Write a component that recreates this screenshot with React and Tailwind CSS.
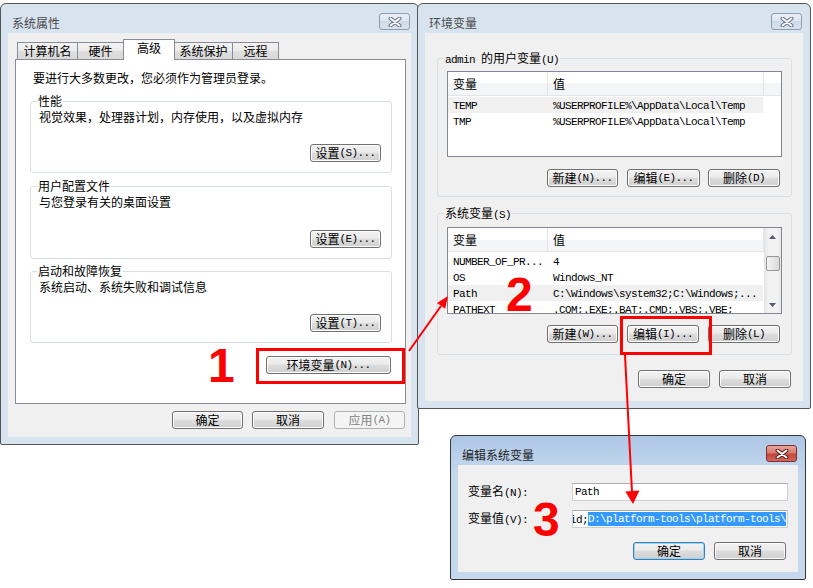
import React from "react";

function Mix({ text }) {
  const parts = text.match(/[\x00-\x7f]+|[^\x00-\x7f]+/g) || [];
  return parts.map((p, i) =>
    /^[\x00-\x7f]/.test(p) ? (
      <span key={i} className="font-['Liberation_Mono',monospace] text-[11px] tracking-[-0.6px] whitespace-pre">
        {p}
      </span>
    ) : (
      <span key={i}>{p}</span>
    )
  );
}

function Btn({ label, w, disabled, primary }) {
  let look =
    "border-[#707070] bg-[linear-gradient(#f2f2f2,#ebebeb_45%,#dddddd_50%,#cfcfcf)] shadow-[inset_0_0_0_1px_#fcfcfc] text-black";
  if (disabled) look = "border-[#adb2b5] bg-[#f4f4f4] text-[#838383]";
  if (primary)
    look =
      "border-[#3c7fb1] bg-[linear-gradient(#f2f2f2,#ebebeb_45%,#dddddd_50%,#cfcfcf)] shadow-[inset_0_0_0_1px_#97d4f6] text-black";
  return (
    <div className={`flex items-center justify-center h-[18px] rounded-[3px] border ${look} ${w}`}>
      <Mix text={label} />
    </div>
  );
}

function Group({ title, bg, className, children }) {
  return (
    <div className={`relative rounded-[3px] border border-[#d5dfe5] ${className}`}>
      <span className={`absolute -top-[9px] left-[6px] px-[1px] ${bg}`}>
        <Mix text={title} />
      </span>
      {children}
    </div>
  );
}

function CloseBtn({ active }) {
  return (
    <div
      className={`mt-[9px] mr-[1px] w-[31px] h-[17px] rounded-[3px] border flex items-center justify-center ${
        active
          ? "border-[#7d2f29] bg-[linear-gradient(#e8a59b,#d97a6e_45%,#c4473c_55%,#d26759)]"
          : "border-[#8e9cb0] bg-[linear-gradient(#e9eff7,#dbe4f0_50%,#cfdbea_50%,#d8e2ef)]"
      }`}
    >
      <svg width="14" height="10" viewBox="0 0 14 10">
        <path
          d="M2.5 1.5 L11.5 8.5 M11.5 1.5 L2.5 8.5"
          stroke={active ? "#5a1d18" : "#6d7786"}
          strokeWidth="4"
          strokeLinecap="round"
        />
        <path
          d="M2.5 1.5 L11.5 8.5 M11.5 1.5 L2.5 8.5"
          stroke={active ? "#ffffff" : "#f5f7fa"}
          strokeWidth="2"
          strokeLinecap="round"
        />
      </svg>
    </div>
  );
}

function Window({ title, active, className, children }) {
  return (
    <div
      className={`absolute flex flex-col border rounded-t-[6px] rounded-b-[2px] px-[7px] pb-[7px] ${
        active
          ? "border-[#363636] bg-[linear-gradient(#adc7e6,#c6d8ee_40px,#c6d8ee)]"
          : "border-[#555555] bg-[#d8e3f0]"
      } ${className}`}
    >
      <div className="h-[29px] flex justify-between shrink-0">
        <div className={`mt-[11px] ml-[4px] ${active ? "text-[#1e1e1e]" : "text-[#4a4a4a]"}`}>{title}</div>
        <CloseBtn active={active} />
      </div>
      <div className="flex-1 bg-[#f0f0f0]">{children}</div>
    </div>
  );
}

function Tab({ label, w }) {
  return (
    <div
      className={`h-[17px] mb-px border border-b-0 border-[#898c95] bg-[linear-gradient(#f3f3f3,#ebebeb_50%,#dedede_50%,#d9d9d9)] flex justify-center ${w}`}
    >
      {label}
    </div>
  );
}

function ScrollBar() {
  return (
    <div className="w-[17px] shrink-0 h-full flex flex-col items-center bg-[linear-gradient(90deg,#e3e3e3,#f2f2f2_25%,#f2f2f2_75%,#e9e9e9)]">
      <div className="h-[17px] flex items-center justify-center">
        <svg width="7" height="4" viewBox="0 0 7 4">
          <path d="M0 4 L3.5 0 L7 4Z" fill="#4e5b70" />
        </svg>
      </div>
      <div className="mt-[11px] w-[14px] h-[15px] rounded-[2px] border border-[#979797] bg-[linear-gradient(90deg,#f4f4f4,#e8e8e8_50%,#d9d9d9)]" />
      <div className="flex-1" />
      <div className="h-[17px] flex items-center justify-center">
        <svg width="7" height="4" viewBox="0 0 7 4">
          <path d="M0 0 L3.5 4 L7 0Z" fill="#4e5b70" />
        </svg>
      </div>
    </div>
  );
}

function VarList({ rows, sel, scroll, h }) {
  return (
    <div className={`flex overflow-hidden border border-[#828790] bg-white w-[335px] ${h}`}>
      <div className="w-[316px] shrink-0">
        <div className="flex h-[24px] border-b border-[#e5e5e5] bg-[linear-gradient(#ffffff_50%,#f4f5f7_50%)]">
          <div className="w-[100px] border-r border-[#e5e5e5] pl-[5px] flex items-center">变量</div>
          <div className="w-[216px] border-r border-[#e5e5e5] pl-[5px] flex items-center">值</div>
        </div>
        <div className="mt-px">
          {rows.map(([k, v], i) => (
            <div
              key={i}
              className={`flex h-[16px] items-center w-[315px] whitespace-nowrap overflow-hidden ${
                i === sel ? "bg-[#f0f0f0]" : ""
              }`}
            >
              <div className="w-[100px] shrink-0 pl-[5px]">
                <Mix text={k} />
              </div>
              <div className="pl-[5px]">
                <Mix text={v} />
              </div>
            </div>
          ))}
        </div>
      </div>
      {scroll ? (
        <ScrollBar />
      ) : (
        <div className="flex-1 h-[24px] border-b border-[#e5e5e5] bg-[linear-gradient(#ffffff_50%,#f4f5f7_50%)]" />
      )}
    </div>
  );
}

function SysProps() {
  return (
    <Window title="系统属性" className="left-0 top-[3px] w-[419px] h-[442px]">
      <div className="pl-[7px] pt-[6px]">
        <div className="relative z-10 flex items-end h-[21px] -mb-px ml-[2px]">
          <Tab label="计算机名" w="w-[61px]" />
          <Tab label="硬件" w="w-[47px] -ml-px" />
          <div className="-ml-px w-[52px] h-[21px] border border-b-0 border-[#898c95] bg-white flex justify-center">
            高级
          </div>
          <Tab label="系统保护" w="w-[59px] -ml-px" />
          <Tab label="远程" w="w-[47px] -ml-px" />
        </div>
        <div className="w-[391px] h-[345px] border border-[#898c95] bg-white flex flex-col pl-[14px] pt-[10px]">
          <div className="ml-[3px]">要进行大多数更改，您必须作为管理员登录。</div>
          <Group
            title="性能"
            bg="bg-white"
            className="mt-[15px] w-[362px] h-[72px] flex flex-col justify-between pt-[7px] pl-[8px] pr-[10px] pb-[10px]"
          >
            <div>视觉效果，处理器计划，内存使用，以及虚拟内存</div>
            <div className="self-end">
              <Btn label="设置(S)..." w="w-[71px]" />
            </div>
          </Group>
          <Group
            title="用户配置文件"
            bg="bg-white"
            className="mt-[13px] w-[362px] h-[73px] flex flex-col justify-between pt-[7px] pl-[8px] pr-[10px] pb-[10px]"
          >
            <div>与您登录有关的桌面设置</div>
            <div className="self-end">
              <Btn label="设置(E)..." w="w-[71px]" />
            </div>
          </Group>
          <Group
            title="启动和故障恢复"
            bg="bg-white"
            className="mt-[12px] w-[362px] h-[72px] flex flex-col justify-between pt-[7px] pl-[8px] pr-[10px] pb-[10px]"
          >
            <div>系统启动、系统失败和调试信息</div>
            <div className="self-end">
              <Btn label="设置(T)..." w="w-[71px]" />
            </div>
          </Group>
          <div className="w-[362px] flex justify-end mt-[13px] pr-[1px]">
            <Btn label="环境变量(N)..." w="w-[125px]" />
          </div>
        </div>
        <div className="w-[391px] flex justify-end mt-[7px] pr-[1px]">
          <Btn label="确定" w="w-[71px]" />
          <div className="ml-[9px]">
            <Btn label="取消" w="w-[72px]" />
          </div>
          <div className="ml-[10px]">
            <Btn label="应用(A)" w="w-[71px]" disabled />
          </div>
        </div>
      </div>
    </Window>
  );
}

function EnvVars() {
  return (
    <Window title="环境变量" className="left-[417px] top-[3px] w-[394px] h-[406px]">
      <div className="pl-[12px] pt-[25px] flex flex-col">
        <Group title="admin 的用户变量(U)" bg="bg-[#f0f0f0]" className="w-[355px] h-[139px] pt-[12px] pl-[9px]">
          <VarList
            h="h-[86px]"
            sel={0}
            rows={[
              ["TEMP", "%USERPROFILE%\\AppData\\Local\\Temp"],
              ["TMP", "%USERPROFILE%\\AppData\\Local\\Temp"],
            ]}
          />
          <div className="flex justify-end mt-[12px] mr-[11px]">
            <Btn label="新建(N)..." w="w-[71px]" />
            <div className="ml-[9px]">
              <Btn label="编辑(E)..." w="w-[73px]" />
            </div>
            <div className="ml-[8px]">
              <Btn label="删除(D)" w="w-[72px]" />
            </div>
          </div>
        </Group>
        <Group title="系统变量(S)" bg="bg-[#f0f0f0]" className="mt-[16px] w-[355px] h-[142px] pt-[13px] pl-[9px]">
          <VarList
            h="h-[87px]"
            sel={2}
            scroll
            rows={[
              ["NUMBER_OF_PR...", "4"],
              ["OS", "Windows_NT"],
              ["Path", "C:\\Windows\\system32;C:\\Windows;..."],
              ["PATHEXT", ".COM;.EXE;.BAT;.CMD;.VBS;.VBE;"],
            ]}
          />
          <div className="flex justify-end mt-[11px] mr-[11px]">
            <Btn label="新建(W)..." w="w-[71px]" />
            <div className="ml-[9px]">
              <Btn label="编辑(I)..." w="w-[72px]" />
            </div>
            <div className="ml-[9px]">
              <Btn label="删除(L)" w="w-[72px]" />
            </div>
          </div>
        </Group>
        <div className="w-[355px] flex justify-end mt-[15px] pr-[1px]">
          <Btn label="确定" w="w-[72px]" />
          <div className="ml-[9px]">
            <Btn label="取消" w="w-[72px]" />
          </div>
        </div>
      </div>
    </Window>
  );
}

function EditVar() {
  return (
    <Window title="编辑系统变量" active className="left-[450px] top-[435px] w-[356px] h-[145px]">
      <div className="pl-[10px] pt-[18px] flex flex-col">
        <div className="flex items-center">
          <div className="w-[104px]">
            <Mix text="变量名(N):" />
          </div>
          <div className="w-[216px] h-[18px] border border-[#c9ced8] border-t-[#abadb3] bg-white flex items-center pl-[2px]">
            <Mix text="Path" />
          </div>
        </div>
        <div className="flex items-center mt-[9px]">
          <div className="w-[104px]">
            <Mix text="变量值(V):" />
          </div>
          <div className="w-[216px] h-[18px] border border-[#c9ced8] border-t-[#abadb3] bg-white flex items-center overflow-hidden whitespace-nowrap">
            <span className="-ml-[3px]">
              <Mix text="id;" />
            </span>
            <span className="h-[14px] flex items-center bg-[#3399ff] text-white">
              <Mix text="D:\platform-tools\platform-tools\" />
            </span>
          </div>
        </div>
        <div className="flex justify-end mt-[14px] pr-[12px]">
          <Btn label="确定" w="w-[72px]" primary />
          <div className="ml-[9px]">
            <Btn label="取消" w="w-[72px]" />
          </div>
        </div>
      </div>
    </Window>
  );
}

export default function App() {
  return (
    <div className="relative w-[813px] h-[588px] overflow-hidden bg-white text-black text-[12px] leading-[16px] font-['Noto_Sans_CJK_SC',sans-serif]">
      <SysProps />
      <EnvVars />
      <EditVar />

      {/* annotations */}
      <div className="absolute left-[256px] top-[348px] w-[149px] h-[36px] border-[3px] border-[#ff0000]" />
      <div className="absolute left-[620px] top-[316px] w-[92px] h-[39px] border-[3px] border-[#ff0000]" />
      <svg className="absolute left-0 top-0 pointer-events-none" width="813" height="588">
        <line x1="409" y1="351" x2="441" y2="306" stroke="#ff0000" strokeWidth="2" />
        <polygon points="448,296 445.2,308.7 437,302.9" fill="#ff0000" />
        <line x1="625" y1="355" x2="632" y2="492" stroke="#ff0000" strokeWidth="2" />
        <polygon points="633,504 639.5,490.6 625.3,491.4" fill="#ff0000" />
      </svg>
      <div className="absolute left-[208px] top-[342px] text-[48px] leading-[48px] font-bold text-[#ff0000] font-['Liberation_Sans',sans-serif]">
        1
      </div>
      <div className="absolute left-[506px] top-[271px] text-[48px] leading-[48px] font-bold text-[#ff0000] font-['Liberation_Sans',sans-serif]">
        2
      </div>
      <div className="absolute left-[533px] top-[496px] text-[48px] leading-[48px] font-bold text-[#ff0000] font-['Liberation_Sans',sans-serif]">
        3
      </div>
    </div>
  );
}
